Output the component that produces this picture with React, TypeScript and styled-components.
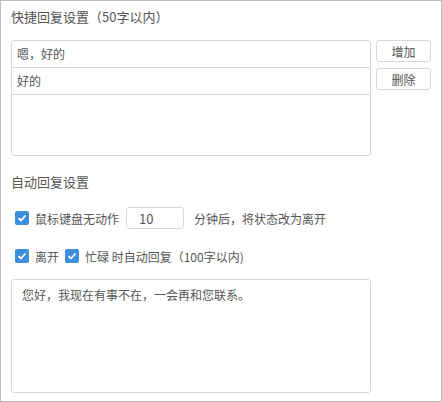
import React from 'react';
import styled, { createGlobalStyle } from 'styled-components';

const Global = createGlobalStyle`
  html, body { margin: 0; padding: 0; background: #fff; }
  body { font-family: "Noto Sans CJK SC", "Liberation Sans", sans-serif; font-size: 12px; color: #444; }
`;

const Frame = styled.div`
  box-sizing: border-box;
  width: 442px;
  height: 402px;
  border: 1px solid #bdbdbd;
  padding: 6px 10px 0 10px;
`;

const Title = styled.div`
  font-size: 13px;
  color: #555;
  height: 20px;
  line-height: 20px;
  margin-bottom: 13px;
`;

const ListArea = styled.div`
  display: flex;
  gap: 5px;
  align-items: flex-start;
`;

const ListBox = styled.div`
  width: 362px;
  height: 116px;
  box-sizing: border-box;
  border: 1px solid #d8d8d8;
  border-radius: 3px;
`;

const ListRow = styled.div`
  height: 27px;
  line-height: 26px;
  box-sizing: border-box;
  border-bottom: 1px solid #d8d8d8;
  padding-left: 5px;
  color: #555;
`;

const Buttons = styled.div`
  display: flex;
  flex-direction: column;
  gap: 6px;
`;

const Button = styled.button`
  width: 55px;
  height: 22px;
  box-sizing: border-box;
  border: 1px solid #d8d8d8;
  border-radius: 3px;
  background: #fff;
  color: #555;
  font-family: inherit;
  font-size: 12px;
  padding: 0;
`;

const Section = styled(Title)`
  margin-top: 16px;
  margin-bottom: 14px;
`;

const Row = styled.div`
  display: flex;
  align-items: center;
  gap: 6px;
  height: 24px;
  padding-left: 4px;
  margin-bottom: 11px;
  color: #555;
`;

const Check = styled.span`
  width: 14px;
  height: 14px;
  border-radius: 2px;
  background: #3d8fdc;
  display: inline-flex;
  align-items: center;
  justify-content: center;
`;

const NumInput = styled.div`
  width: 58px;
  height: 22px;
  box-sizing: border-box;
  border: 1px solid #d8d8d8;
  border-radius: 3px;
  padding-left: 12px;
  line-height: 22px;
  font-size: 13px;
  margin: 0 4px 0 1px;
`;

const TextArea = styled.div`
  width: 360px;
  height: 114px;
  box-sizing: border-box;
  border: 1px solid #d8d8d8;
  border-radius: 3px;
  padding: 6px 10px;
  color: #555;
`;

const Checkbox = () => (
  <Check>
    <svg width="10" height="10" viewBox="0 0 10 10">
      <path d="M1.5 5.2 L4 7.5 L8.5 2.5" fill="none" stroke="#fff" strokeWidth="1.8" />
    </svg>
  </Check>
);

export default function App() {
  return (
    <>
      <Global />
      <Frame>
        <Title>快捷回复设置（50字以内）</Title>
        <ListArea>
          <ListBox>
            <ListRow>嗯，好的</ListRow>
            <ListRow>好的</ListRow>
          </ListBox>
          <Buttons>
            <Button>增加</Button>
            <Button>删除</Button>
          </Buttons>
        </ListArea>
        <Section>自动回复设置</Section>
        <Row style={{ marginBottom: 14 }}>
          <Checkbox />
          <span>鼠标键盘无动作</span>
          <NumInput>10</NumInput>
          <span>分钟后，将状态改为离开</span>
        </Row>
        <Row>
          <Checkbox />
          <span>离开</span>
          <Checkbox />
          <span>忙碌 时自动回复（100字以内)</span>
        </Row>
        <TextArea>您好，我现在有事不在，一会再和您联系。</TextArea>
      </Frame>
    </>
  );
}
